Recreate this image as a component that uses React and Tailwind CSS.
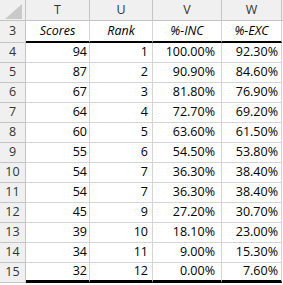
import React from "react";

const rows = [
  [4, 94, 1, "100.00%", "92.30%"],
  [5, 87, 2, "90.90%", "84.60%"],
  [6, 67, 3, "81.80%", "76.90%"],
  [7, 64, 4, "72.70%", "69.20%"],
  [8, 60, 5, "63.60%", "61.50%"],
  [9, 55, 6, "54.50%", "53.80%"],
  [10, 54, 7, "36.30%", "38.40%"],
  [11, 54, 7, "36.30%", "38.40%"],
  [12, 45, 9, "27.20%", "30.70%"],
  [13, 39, 10, "18.10%", "23.00%"],
  [14, 34, 11, "9.00%", "15.30%"],
  [15, 32, 12, "0.00%", "7.60%"],
];

export default function App() {
  const font = { fontFamily: '"Open Sans", "Noto Sans", sans-serif' };
  return (
    <div className="w-[283px] h-[285px] bg-white overflow-hidden text-[12.5px] text-black" style={font}>
      {/* column headers */}
      <div className="flex h-[21px]">
        <div className="w-[26px] h-full bg-[#f0f0f0] border-r border-b border-[#c4c4c4] flex items-end justify-end pr-[3px] pb-[1px]">
          <svg width="17" height="15" viewBox="0 0 17 15">
            <polygon points="17,0 17,15 0,15" fill="#c9c9c9" />
          </svg>
        </div>
        {["T", "U", "V", "W"].map((c, i) => (
          <div
            key={c}
            className={`${["w-[64px]", "w-[63px]", "w-[69px]", "w-[60px]"][i]} h-full bg-[#f0f0f0] border-r border-b border-[#c4c4c4] flex items-center justify-center text-[#333]`}
          >
            {c}
          </div>
        ))}
        <div className="flex-1 h-full bg-[#f0f0f0] border-b border-[#c4c4c4]" />
      </div>
      {/* row 3 */}
      <div className="flex h-[22px]">
        <div className="w-[26px] h-full bg-[#f0f0f0] border-r border-b border-[#c4c4c4] flex items-center justify-center text-[#333]">3</div>
        <div className="w-[64px] h-full border-r border-[#d4d4d4] border-b-2 border-b-black flex items-center justify-center italic">Scores</div>
        <div className="w-[63px] h-full border-r border-[#d4d4d4] border-b-2 border-b-black flex items-center justify-center italic">Rank</div>
        <div className="w-[69px] h-full border-r border-[#d4d4d4] border-b-2 border-b-black flex items-center justify-center italic">%-INC</div>
        <div className="w-[60px] h-full border-r border-[#d4d4d4] border-b-2 border-b-black flex items-center justify-center italic">%-EXC</div>
        <div className="flex-1" />
      </div>
      {rows.map((r, idx) => {
        const last = idx === rows.length - 1;
        const b = last ? "border-b-[3px] border-b-black" : "border-b border-b-[#d4d4d4]";
        return (
          <div key={r[0]} className="flex h-[20px]">
            <div className={`w-[26px] h-full bg-[#f0f0f0] border-r border-b border-[#c4c4c4] flex items-center justify-center text-[#333] ${last ? "h-[20px]" : ""}`}>
              {r[0]}
            </div>
            <div className={`w-[64px] h-full border-r border-r-[#d4d4d4] ${b} flex items-center justify-end pr-[2px]`}>{r[1]}</div>
            <div className={`w-[63px] h-full border-r border-r-[#d4d4d4] ${b} flex items-center justify-end pr-[4px]`}>{r[2]}</div>
            <div className={`w-[69px] h-full border-r border-r-[#d4d4d4] ${b} flex items-center justify-end pr-[6px]`}>{r[3]}</div>
            <div className={`w-[60px] h-full border-r border-r-[#d4d4d4] ${b} flex items-center justify-end pr-[3px]`}>{r[4]}</div>
            <div className="flex-1" />
          </div>
        );
      })}
    </div>
  );
}
